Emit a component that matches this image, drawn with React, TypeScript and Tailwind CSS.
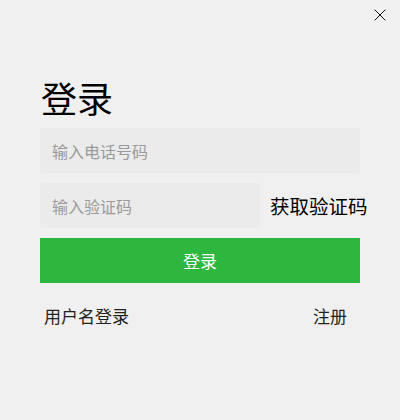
import { X } from 'lucide-react';

export default function App() {
  return (
    <div
      className="relative w-[400px] h-[420px] bg-[#f0f0f0] text-black"
      style={{ fontFamily: '"Noto Sans CJK SC", "Noto Sans", sans-serif' }}
    >
      <button className="absolute right-[10px] top-[5px] p-0 text-[#111]">
        <X size={20} strokeWidth={1.2} />
      </button>

      <div className="pt-[76px] px-[40px] flex flex-col">
        <h1 className="text-[36px] leading-[42px] pl-[1px] mb-[10px] font-normal">登录</h1>

        <input
          placeholder="输入电话号码"
          className="h-[45px] w-full rounded-[4px] bg-[#ebebeb] px-[12px] text-[16px] placeholder:text-[#9a9a9a] outline-none"
        />

        <div className="mt-[10px] flex items-center">
          <input
            placeholder="输入验证码"
            className="h-[45px] w-[220px] shrink-0 rounded-[4px] bg-[#ebebeb] px-[12px] text-[16px] placeholder:text-[#9a9a9a] outline-none"
          />
          <span className="ml-[10px] text-[19.5px] whitespace-nowrap">获取验证码</span>
        </div>

        <button className="mt-[10px] h-[45px] w-full bg-[#2db73f] text-white text-[17px]">
          登录
        </button>

        <div className="mt-[20px] flex justify-between px-[4px] pr-[13px] text-[17px] text-[#222]">
          <span>用户名登录</span>
          <span>注册</span>
        </div>
      </div>
    </div>
  );
}
